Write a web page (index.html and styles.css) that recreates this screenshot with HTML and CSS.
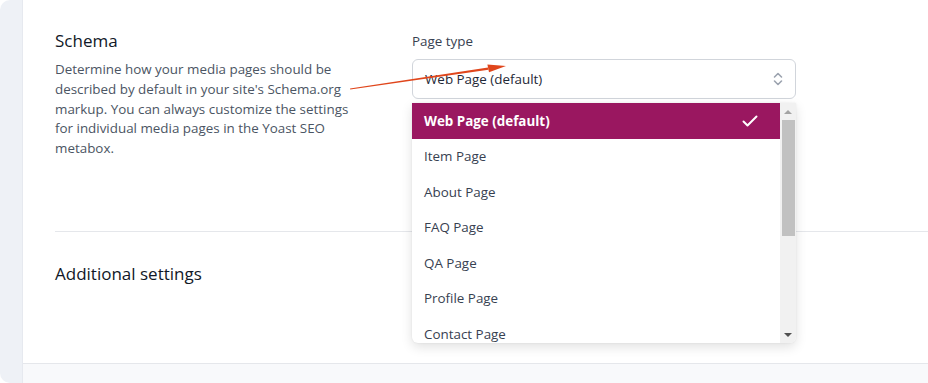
FILE: index.html
```html
<!DOCTYPE html>
<html lang="en">
<head>
  <meta charset="UTF-8" />
  <title>Media pages - Schema</title>
  <link rel="stylesheet" href="styles.css">
</head>
<body>

<div class="rail"></div>

<div class="main">
  <div class="card">

    <div class="section">
      <div class="intro">
        <h2>Schema</h2>
        <p>Determine how your media pages should be described by default in your site's Schema.org markup. You can always customize the settings for individual media pages in the Yoast SEO metabox.</p>
      </div>

      <div class="field">
        <label>Page type</label>
        <div class="select">
          <span>Web Page (default)</span>
          <svg class="chevrons" width="10" height="16" viewBox="0 0 10 16">
            <path d="M1.5 6 L5 2.5 L8.5 6" fill="none" stroke="#9ca3af" stroke-width="1.6" stroke-linecap="round" stroke-linejoin="round"/>
            <path d="M1.5 10 L5 13.5 L8.5 10" fill="none" stroke="#9ca3af" stroke-width="1.6" stroke-linecap="round" stroke-linejoin="round"/>
          </svg>
        </div>

        <div class="dropdown">
          <ul class="options">
            <li class="active">Web Page (default)
              <svg width="16" height="12" viewBox="0 0 16 12">
                <path d="M1.5 6.5 L5.5 10.5 L14.5 1.5" fill="none" stroke="#fff" stroke-width="2" stroke-linecap="round" stroke-linejoin="round"/>
              </svg>
            </li>
            <li>Item Page</li>
            <li>About Page</li>
            <li>FAQ Page</li>
            <li>QA Page</li>
            <li>Profile Page</li>
            <li>Contact Page</li>
          </ul>
          <div class="scrollbar">
            <span class="arrow up"></span>
            <div class="thumb"></div>
            <span class="arrow down"></span>
          </div>
        </div>
      </div>
    </div>

    <div class="section second">
      <h2>Additional settings</h2>
    </div>

  </div>
  <div class="footer"></div>
</div>

<!-- annotation arrow -->
<svg class="pointer" width="928" height="383" viewBox="0 0 928 383">
  <polygon points="350,88.6 350.2,89.6 488.5,69.7 488,67.4" fill="#e0461c"/>
  <polygon points="506,66 487.4,64.6 489,72.3" fill="#e0461c"/>
</svg>

</body>
</html>
```

FILE: styles.css
```css
body {
  margin: 0;
  height: 383px;
  display: flex;
  background: #fff;
  font-family: "Open Sans", "Noto Sans", sans-serif;
  color: #1f2937;
  overflow: hidden;
}

.rail {
  width: 22px;
  flex-shrink: 0;
  background: #eef1f6;
  border-right: 1px solid #e6e9ef;
  border-radius: 10px 0 0 10px;
}

.main {
  flex: 1;
  display: flex;
  flex-direction: column;
}

.card {
  flex: 1;
  padding-left: 32px;
}

h2 {
  margin: 0;
  font-size: 17px;
  font-weight: 400;
  line-height: 24px;
  color: #111827;
}

.section {
  display: grid;
  grid-template-columns: 357px 384px;
  height: 232px;
  box-sizing: border-box;
  padding-top: 29px;
  border-bottom: 1px solid #e5e7eb;
}

.intro p {
  margin: 7px 0 0;
  width: 300px;
  font-size: 13.4px;
  line-height: 19.8px;
  color: #4b5563;
}

.field {
  position: relative;
  padding-top: 3px;
}

label {
  display: block;
  font-size: 13.4px;
  line-height: 18px;
  color: #374151;
}

.select {
  margin-top: 9px;
  height: 40px;
  box-sizing: border-box;
  border: 1px solid #d1d5db;
  border-radius: 6px;
  padding: 0 12px;
  display: flex;
  align-items: center;
  justify-content: space-between;
  font-size: 13.4px;
  color: #1f2937;
}

.dropdown {
  position: absolute;
  top: 74px;
  left: 0;
  width: 384px;
  height: 240px;
  display: flex;
  background: #fff;
  border-radius: 0 0 6px 6px;
  box-shadow: 0 4px 12px rgba(0, 0, 0, 0.12), 0 0 2px rgba(0, 0, 0, 0.08);
  overflow: hidden;
}

.options {
  list-style: none;
  margin: 0;
  padding: 0;
  flex: 1;
}

.options li {
  height: 35.5px;
  padding: 0 22px 0 12px;
  display: flex;
  align-items: center;
  justify-content: space-between;
  font-size: 13.4px;
  color: #374151;
}

.options li.active {
  background: #9a1760;
  color: #fff;
  font-weight: 700;
}

.scrollbar {
  width: 16px;
  background: #f1f1f1;
  display: flex;
  flex-direction: column;
  align-items: center;
}

.thumb {
  width: 13px;
  height: 116px;
  background: #c1c1c1;
}

.arrow {
  width: 0;
  height: 0;
  border-left: 4px solid transparent;
  border-right: 4px solid transparent;
}

.arrow.up {
  margin: 7px 0 6px;
  border-bottom: 4px solid #a3a3a3;
}

.arrow.down {
  margin-top: auto;
  margin-bottom: 6px;
  border-top: 4px solid #505050;
}

.section.second {
  display: block;
  height: auto;
  border-bottom: none;
  padding-top: 30px;
}

.footer {
  height: 19px;
  background: #f8f9fb;
  border-top: 1px solid #e5e7eb;
}

.pointer {
  position: absolute;
  left: 0;
  top: 0;
  pointer-events: none;
}
```
